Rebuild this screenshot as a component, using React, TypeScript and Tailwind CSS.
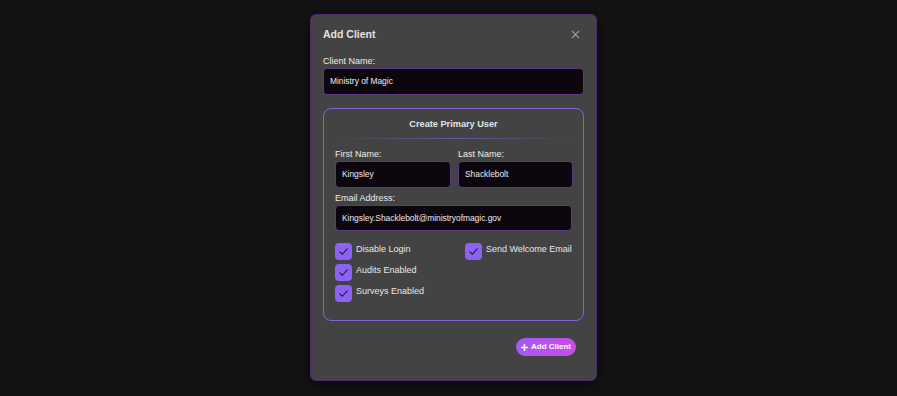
import React from "react";

function Check() {
  return (
    <div className="w-[17px] h-[17px] rounded-[4px] bg-[#8b62f2] flex items-center justify-center shrink-0">
      <svg width="11" height="11" viewBox="0 0 12 12" fill="none">
        <path d="M2 6.3 L4.8 9 L10 3.2" stroke="#2a1748" strokeWidth="1.2" strokeLinecap="round" strokeLinejoin="round" />
      </svg>
    </div>
  );
}

function CheckRow({ label }: { label: string }) {
  return (
    <div className="flex items-start gap-[4px] h-[17px] whitespace-nowrap">
      <Check />
      <span className="text-[9px] leading-[13px] text-[#e8e8e8]">{label}</span>
    </div>
  );
}

function Field({ label, value, h = 27 }: { label: string; value: string; h?: number }) {
  return (
    <div className="flex flex-col">
      <div className="text-[9px] leading-[12px] font-medium text-[#ececec] mb-[1px]">{label}</div>
      <div
        className={`rounded-[4px] border border-[#5e3a82] bg-[#0c070f] flex items-center px-[6px] text-[8.4px] text-[#ececec] ${h === 27 ? "h-[27px]" : "h-[26px]"}`}
      >
        {value}
      </div>
    </div>
  );
}

export default function App() {
  return (
    <div
      className="w-[897px] h-[396px] bg-[#131313] flex justify-center pt-[14px] pl-[10px]"
      style={{ fontFamily: '"Liberation Sans", Arial, sans-serif' }}
    >
      <div className="w-[287px] h-[367px] bg-[#434343] border border-[#4b2b6b] rounded-[6px] shadow-[0_4px_14px_rgba(0,0,0,0.6)] px-[12px] pt-[12px] flex flex-col">
        <div className="flex items-center justify-between h-[14px]">
          <div className="text-[10.5px] leading-[14px] font-bold text-[#e2e2e2]">Add Client</div>
          <svg width="9" height="9" viewBox="0 0 10 10" className="mr-[4px]">
            <path d="M1.5 1.5 L8.5 8.5 M8.5 1.5 L1.5 8.5" stroke="#a0a0a0" strokeWidth="1.3" strokeLinecap="round" />
          </svg>
        </div>

        <div className="mt-[14px]">
          <Field label="Client Name:" value="Ministry of Magic" />
        </div>

        <div className="mt-[13px] rounded-[8px] border border-[#8461d6] px-[11px] pt-[9px] pb-[18px] flex flex-col">
          <div className="text-center text-[9.2px] leading-[12px] font-bold text-[#e2e2e2]">Create Primary User</div>
          <div className="mt-[8px] h-px bg-gradient-to-r from-transparent via-[#6e55a0] to-transparent" />
          <div className="mt-[9px] grid grid-cols-[116px_115px] gap-x-[7px]">
            <Field label="First Name:" value="Kingsley" />
            <Field label="Last Name:" value="Shacklebolt" />
          </div>
          <div className="mt-[4px]">
            <Field label="Email Address:" value="Kingsley.Shacklebolt@ministryofmagic.gov" h={26} />
          </div>
          <div className="mt-[12px] grid grid-cols-[130px_1fr] gap-y-[4px]">
            <CheckRow label="Disable Login" />
            <CheckRow label="Send Welcome Email" />
            <CheckRow label="Audits Enabled" />
            <div />
            <CheckRow label="Surveys Enabled" />
          </div>
        </div>

        <div className="mt-[17px] flex justify-end pr-[8px]">
          <div className="h-[18px] rounded-full bg-gradient-to-r from-[#a25af4] to-[#c84ce6] flex items-center px-[5px] gap-[3px]">
            <svg width="7" height="7" viewBox="0 0 8 8">
              <path d="M4 0.8 V7.2 M0.8 4 H7.2" stroke="#ffffff" strokeWidth="1.8" strokeLinecap="round" />
            </svg>
            <span className="text-[8px] font-bold text-white leading-[10px]">Add Client</span>
          </div>
        </div>
      </div>
    </div>
  );
}
